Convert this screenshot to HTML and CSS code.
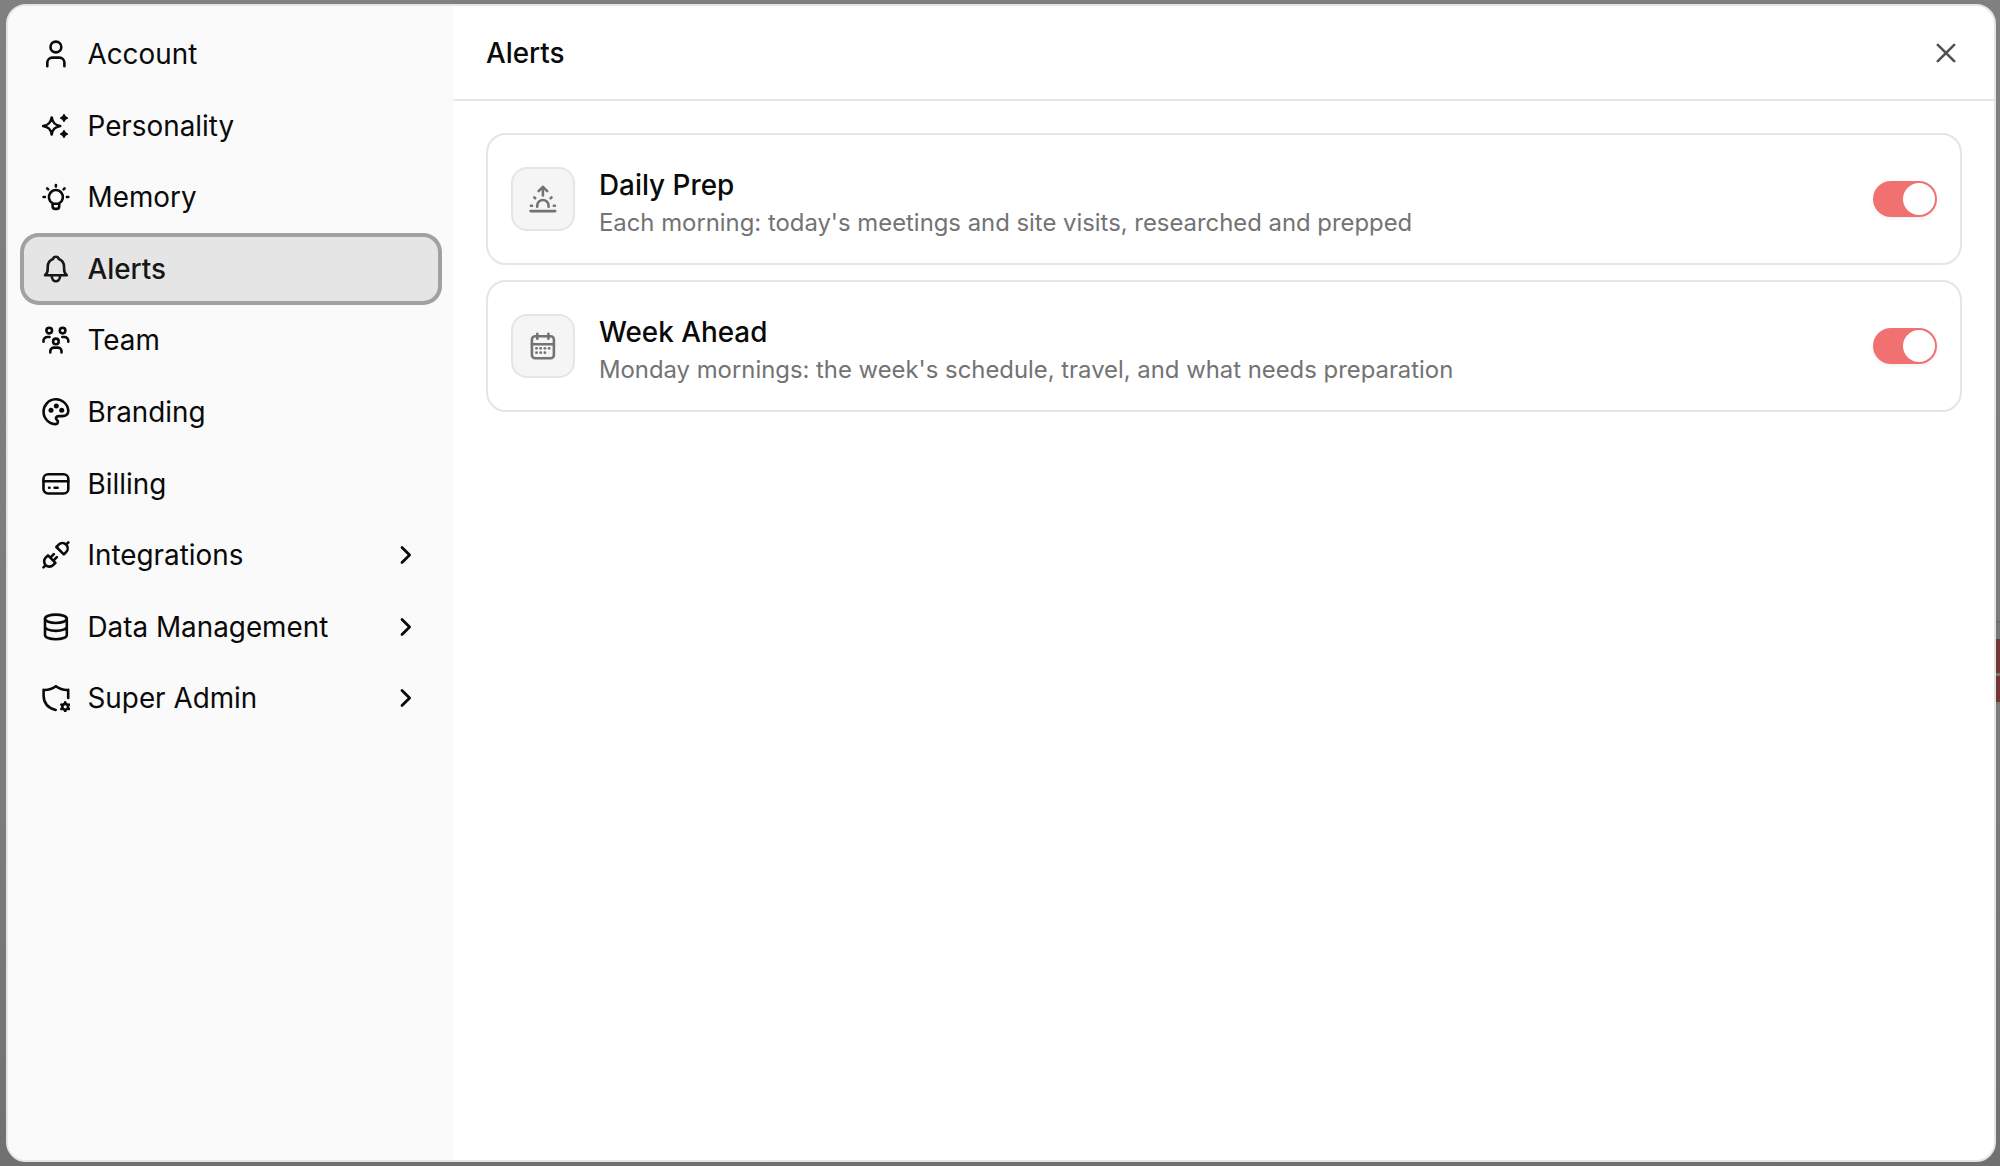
FILE: index.html
```html
<!DOCTYPE html>
<html lang="en">
<head>
<meta charset="utf-8">
<title>Alerts</title>
<link rel="stylesheet" href="styles.css">
</head>
<body>
<div class="backdrop-strip"><span class="strip-block"></span><span class="strip-block small"></span></div>
<div class="modal">
  <nav class="sidebar">
    <a class="item"><svg class="icon" viewBox="0 0 28 28"><circle cx="13.9" cy="7" r="5.4"/><path d="M5.3 26.2v-3.6a5 5 0 0 1 5-5h7.1a5 5 0 0 1 5 5v3.6"/></svg><span>Account</span></a>
    <a class="item"><svg class="icon" viewBox="0 0 28 28"><path d="M9.7 5.6C10.6 10.7 12.7 13 18.2 14C12.7 15 10.6 17.3 9.7 22.4C8.8 17.3 6.7 15 1.2 14C6.7 13 8.8 10.7 9.7 5.6Z"/><path class="solid" d="M22 3C22.4 5 23 5.6 25 6C23 6.4 22.4 7 22 9C21.6 7 21 6.4 19 6C21 5.6 21.6 5 22 3ZM22 19C22.4 21 23 21.6 25 22C23 22.4 22.4 23 22 25C21.6 23 21 22.4 19 22C21 21.6 21.6 21 22 19Z"/></svg><span>Personality</span></a>
    <a class="item"><svg class="icon" viewBox="0 0 28 28"><path d="M10.6 20.2A7 7 0 1 1 17.2 20.2V23.3A2.6 2.6 0 0 1 14.6 25.9H13.2A2.6 2.6 0 0 1 10.6 23.3ZM10.8 20.8H17M13.9 2V3.4M1.5 14H2.9M24.9 14H26.3M5.2 5.3L6.2 6.3M22.6 5.3L21.6 6.3"/></svg><span>Memory</span></a>
    <a class="item active"><svg class="icon" viewBox="0 0 28 28"><path d="M3 20.2C4.8 18.8 5.7 17.4 5.7 14.6V12.2C5.7 8.4 7.8 5.2 11 4.1C11.4 2.5 12.5 1.8 13.9 1.8S16.4 2.5 16.8 4.1C20 5.2 22.1 8.4 22.1 12.2V14.6C22.1 17.4 23 18.8 24.8 20.2ZM9.7 20.5C9.7 28.2 18.1 28.2 18.1 20.5"/></svg><span>Alerts</span></a>
    <a class="item"><svg class="icon" viewBox="0 0 28 28"><circle cx="7.2" cy="4.6" r="2.8"/><circle cx="20.6" cy="4.6" r="2.8"/><circle cx="13.9" cy="15.4" r="2.8"/><path d="M1.5 15.8V14.8A3.8 3.8 0 0 1 5.3 11H7.5M26.3 15.8V14.8A3.8 3.8 0 0 0 22.5 11H20.3M8.3 26.5V25.2A3.6 3.6 0 0 1 11.9 21.6H15.9A3.6 3.6 0 0 1 19.5 25.2V26.5"/></svg><span>Team</span></a>
    <a class="item"><svg class="icon" viewBox="0 0 28 28"><path d="M13.9 26.1A12.4 12.4 0 1 1 26.3 12.7C26.3 16.2 23.8 18.1 20.5 18.1H17C13.9 18.1 13.3 20.3 14.8 21.7C16.6 23.4 16.1 26.1 13.9 26.1Z"/><g class="dots"><circle cx="9" cy="12.3" r="2.5"/><circle cx="14.3" cy="8" r="2.5"/><circle cx="19.7" cy="12.3" r="2.5"/></g></svg><span>Branding</span></a>
    <a class="item"><svg class="icon" viewBox="0 0 28 28"><rect x="1.5" y="4.2" width="24.8" height="19.3" rx="4.6"/><path d="M1.5 11.2H26.3M7.1 17.8H7.5M12.6 17.8H15.6"/></svg><span>Billing</span></a>
    <a class="item"><svg class="icon" viewBox="0 0 28 28"><path d="M14.4 6L21.8 13.4L24.1 11.1A5.2 5.2 0 0 0 16.7 3.7ZM24.1 3.7L26.3 1.5M6 14.4L13.4 21.8L11.1 24.1A5.2 5.2 0 0 1 3.7 16.7ZM3.7 24.1L1.5 26.3M8.4 16.6L11.8 13.2M11.4 19.6L14.8 16.2"/></svg><span>Integrations</span><svg class="chevron" viewBox="0 0 12 20"><path d="M2 2.4L9.6 10L2 17.6"/></svg></a>
    <a class="item"><svg class="icon" viewBox="0 0 28 28"><ellipse cx="13.9" cy="5.8" rx="10.9" ry="4.2"/><path d="M3 5.8V21.9C3 24.3 7.8 26.2 13.9 26.2S24.8 24.3 24.8 21.9V5.8M3 13.7C3 16 7.8 17.9 13.9 17.9S24.8 16 24.8 13.7"/></svg><span>Data Management</span><svg class="chevron" viewBox="0 0 12 20"><path d="M2 2.4L9.6 10L2 17.6"/></svg></a>
    <a class="item"><svg class="icon" viewBox="0 0 28 28"><path d="M13.7 26C5.8 23.8 1.6 18.3 1.6 11.4V5.9C6.5 6.2 10.1 5 13.9 2.2C17.7 5 21.3 6.2 26.2 5.9V14"/><circle cx="23.2" cy="22.8" r="2.9"/><path d="M23.2 18.4V19.5M23.2 26.1V27.2M19.4 20.6L20.3 21.1M26.1 24.5L27 25M19.4 25L20.3 24.5M26.1 21.1L27 20.6"/></svg><span>Super Admin</span><svg class="chevron" viewBox="0 0 12 20"><path d="M2 2.4L9.6 10L2 17.6"/></svg></a>
  </nav>
  <main class="panel">
    <header class="header"><h1>Alerts</h1><button class="close" aria-label="Close"><svg viewBox="0 0 20 20"><path d="M1.8 1.8L18.2 18.2M18.2 1.8L1.8 18.2"/></svg></button></header>
    <div class="cards">
      <section class="card">
        <div class="tile"><svg class="icon" viewBox="0 0 28 28"><path d="M1.6 26.1H26.2M8.2 21.7V20.7A5.7 5.7 0 0 1 19.6 20.7V21.7M13.9 10.5V2.2M9.6 6.1L13.9 1.9L18.2 6.1M5.3 12.5L6.2 13.2M22.5 12.5L21.6 13.2M1.9 20.7H3M24.8 20.7H25.9"/></svg></div>
        <div class="copy"><h2>Daily Prep</h2><p>Each morning: today's meetings and site visits, researched and prepped</p></div>
        <button class="toggle" aria-label="Daily Prep"><span></span></button>
      </section>
      <section class="card">
        <div class="tile"><svg class="icon" viewBox="0 0 28 28"><rect x="2.9" y="4.2" width="22" height="22" rx="3.3"/><path d="M2.9 12.2H24.9M8.3 1.7V6.8M19.4 1.7V6.8"/><g class="dots"><circle cx="7.5" cy="16.3" r="1.4"/><circle cx="11.7" cy="16.3" r="1.4"/><circle cx="15.9" cy="16.3" r="1.4"/><circle cx="20.1" cy="16.3" r="1.4"/><circle cx="7.5" cy="20.7" r="1.4"/><circle cx="11.7" cy="20.7" r="1.4"/><circle cx="15.9" cy="20.7" r="1.4"/></g></svg></div>
        <div class="copy"><h2>Week Ahead</h2><p>Monday mornings: the week's schedule, travel, and what needs preparation</p></div>
        <button class="toggle" aria-label="Week Ahead"><span></span></button>
      </section>
    </div>
  </main>
</div>
</body>
</html>
```
FILE: styles.css
```css
* { box-sizing: border-box; }
body {
  margin: 0;
  height: 1166px;
  padding: 4px 4px 4px 6px;
  overflow: hidden;
  background: linear-gradient(#808080, #7b7b7b 70%, #707070);
  font-family: Inter, "Liberation Sans", sans-serif;
  color: #0a0a0a;
}
h1, h2, p { margin: 0; font-weight: 400; }
button { border: 0; padding: 0; background: none; }
.backdrop-strip {
  position: absolute;
  top: 621px;
  right: 0;
  width: 6px;
  height: 83px;
  padding-top: 16px;
  border-top: 2px solid #6c6c6c;
  background: #777;
}
.strip-block { display: block; height: 34px; margin-bottom: 3px; background: #743634; }
.strip-block.small { height: 26px; }
.modal {
  position: relative;
  display: flex;
  height: 1158px;
  border: 2px solid #e5e5e5;
  border-radius: 20px;
  overflow: hidden;
  background: #fff;
}
.sidebar { width: 446px; padding: 12.3px 12.5px 0 12px; background: #fafafa; }
.item {
  display: flex;
  align-items: center;
  gap: 17.5px;
  height: 71.6px;
  padding: 0 30px 0 22px;
  border-radius: 19px;
  font-size: 27.85px;
  line-height: 40px;
}
.item.active {
  background: #e5e5e5;
  box-shadow: inset 0 0 0 4px #a1a1a1;
  font-weight: 500;
  color: #171717;
}
svg { display: block; flex: none; fill: none; stroke: currentColor; stroke-width: 2.6; stroke-linecap: round; stroke-linejoin: round; }
.icon { width: 28px; height: 28px; }
.solid { fill: currentColor; stroke-width: 1.9; }
.dots { fill: currentColor; stroke: none; }
.chevron { width: 12px; height: 20px; margin-left: auto; stroke-width: 2.8; }
.panel { flex: 1; }
.header {
  display: flex;
  align-items: center;
  justify-content: space-between;
  height: 95px;
  padding: 0 38px 0 32px;
  border-bottom: 2px solid #e5e5e5;
}
.header h1 { font-size: 27.85px; font-weight: 500; line-height: 40px; }
.close { padding-top: 1px; color: #525252; }
.close svg { width: 20px; height: 20px; stroke-width: 2.6; }
.cards { display: flex; flex-direction: column; gap: 15.4px; padding: 32px 32px 32px 31.6px; }
.card {
  display: flex;
  align-items: center;
  height: 132px;
  padding: 0 23px 0 23.4px;
  border: 2px solid #e5e5e5;
  border-radius: 20px;
}
.tile {
  display: grid;
  place-items: center;
  width: 64px;
  height: 64px;
  margin-right: 24px;
  border: 2px solid #e5e5e5;
  border-radius: 16px;
  background: #f5f5f5;
  color: #737373;
}
.copy { flex: 1; padding-top: 7px; }
.copy h2 { font-size: 27.85px; font-weight: 500; line-height: 40px; }
.copy p { font-size: 23.87px; line-height: 36px; color: #737373; }
.toggle {
  display: flex;
  justify-content: flex-end;
  align-items: center;
  width: 64px;
  height: 36px;
  padding-right: 2px;
  border-radius: 18px;
  background: #f07170;
  box-shadow: 0 2px 4px rgba(0, 0, 0, .06);
}
.toggle span { width: 32px; height: 32px; border-radius: 50%; background: #fff; }
```
